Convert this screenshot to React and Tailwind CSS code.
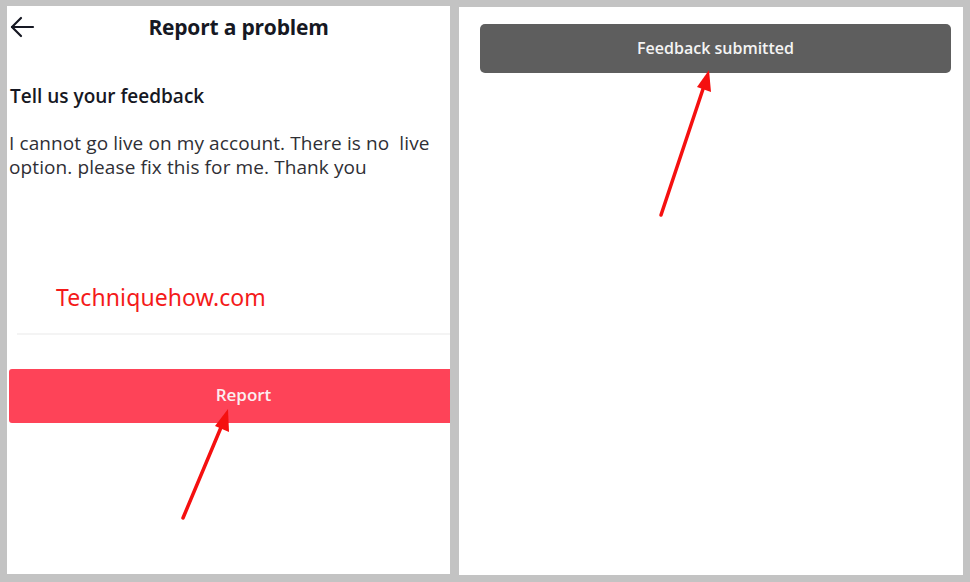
import React from "react";

export default function App() {
  return (
    <div className="relative w-[970px] h-[582px] bg-[#c3c3c3] overflow-hidden" style={{ fontFamily: '"Open Sans", "Noto Sans", sans-serif' }}>
      <div className="flex pt-[6px] pl-[7px] gap-[9px] h-full">
        {/* Left panel */}
        <div className="w-[443px] h-[568px] bg-white flex flex-col">
          <div className="relative h-[45px] flex items-center justify-center">
            <svg className="absolute left-[2px] top-[9px]" width="26" height="24" viewBox="0 0 26 24" fill="none" stroke="#161823" strokeWidth="2.2" strokeLinecap="round" strokeLinejoin="round">
              <path d="M24 12H3" />
              <path d="M12 3L3 12L12 21" />
            </svg>
            <span className="text-[21px] font-bold text-[#161823] tracking-[-0.2px] mt-[-2px] ml-[20px]">Report a problem</span>
          </div>
          <div className="pl-[3px] pt-[33px] text-[19px] font-semibold text-[#161823] leading-[24px]">Tell us your feedback</div>
          <div className="pl-[2px] pt-[23px] text-[19px] text-[#2f2f35] leading-[24px] tracking-[0.1px]">
            I cannot go live on my account. There is no&nbsp; live
            <br />
            option. please fix this for me. Thank you
          </div>
          <div className="pl-[49px] pt-[104px] text-[23px] text-[#f41a1a] leading-[28px] tracking-[0.1px]" style={{ fontFamily: '"Noto Sans", sans-serif' }}>Techniquehow.com</div>
          <div className="mt-[22px] ml-[10px] h-[2px] bg-[#f4f4f4]" />
          <div className="mt-[34px] ml-[2px] h-[54px] bg-[#fe4358] rounded-l-[3px] flex items-center justify-center">
            <span className="text-[17px] font-semibold text-[#fbeef0] ml-[28px] mt-[-2px]">Report</span>
          </div>
        </div>
        {/* Right panel */}
        <div className="relative w-[504px] h-[568px] mt-[1px] bg-white">
          <div className="absolute left-[21px] top-[17px] w-[471px] h-[49px] rounded-[5px] bg-[#5e5e5e] flex items-center justify-center">
            <span className="text-[16px] font-semibold text-[#f4f4f4] mt-[-2px]">Feedback submitted</span>
          </div>
        </div>
      </div>
      {/* Red annotation arrows */}
      <svg className="absolute left-0 top-0 pointer-events-none" width="970" height="582">
        <line x1="183" y1="518" x2="222" y2="425" stroke="#f51010" strokeWidth="3.5" strokeLinecap="round" />
        <polygon points="228,409 229,432 215,426" fill="#f51010" />
        <line x1="661" y1="215" x2="704" y2="86" stroke="#f51010" strokeWidth="3.5" strokeLinecap="round" />
        <polygon points="709,70 711,92 697,87" fill="#f51010" />
      </svg>
    </div>
  );
}
